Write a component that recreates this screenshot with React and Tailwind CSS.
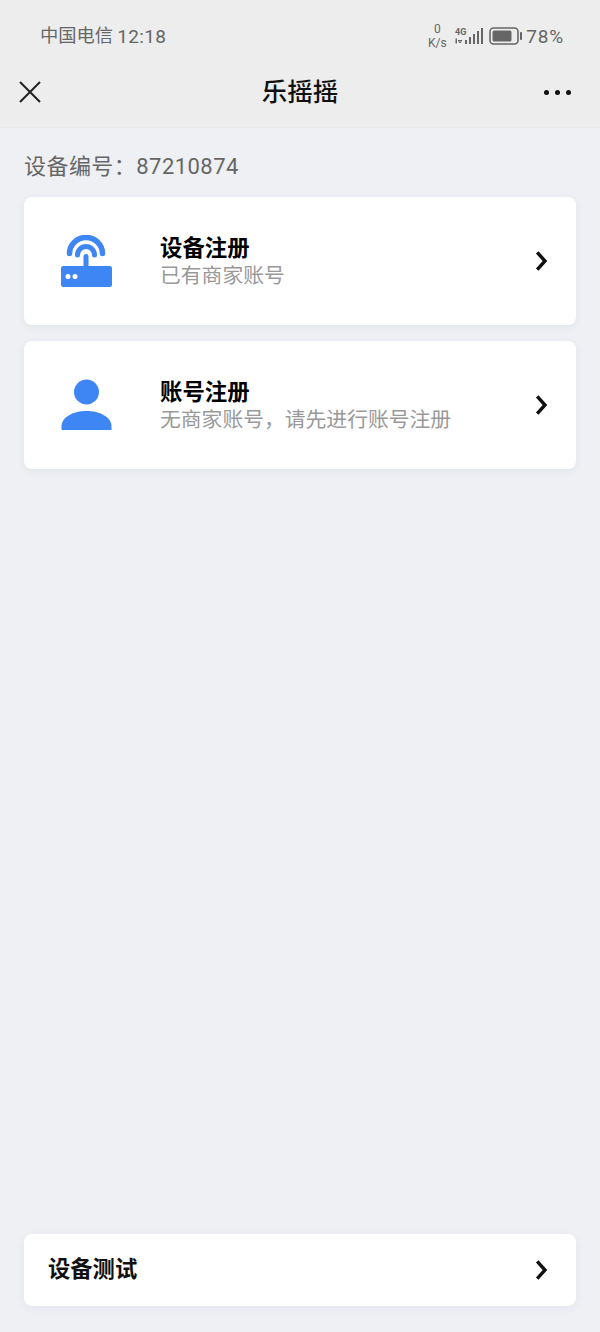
const font = { fontFamily: '"Roboto", "Noto Sans CJK SC", sans-serif' };

function Chevron() {
  return (
    <svg width="14" height="20" viewBox="0 0 14 20" fill="none" className="shrink-0">
      <path d="M2.2 1.4 L10 10 L2.2 18.6" stroke="#111" strokeWidth="3.4" strokeLinejoin="miter" />
    </svg>
  );
}

function Router() {
  return (
    <svg width="52" height="52" viewBox="0 0 52 52" fill="none">
      <path d="M9.5 18.5 A16.5 16 0 0 1 42.5 18.5" stroke="#3f86f5" strokeWidth="5.6" strokeLinecap="round" />
      <path d="M17.5 20 A8.5 8.5 0 0 1 34.5 20" stroke="#3f86f5" strokeWidth="5" strokeLinecap="round" />
      <rect x="23.5" y="19" width="5" height="14" rx="2.5" fill="#3f86f5" />
      <rect x="1" y="31" width="51" height="21" rx="2.5" fill="#3f86f5" />
      <circle cx="8" cy="41.5" r="2.5" fill="#fff" />
      <circle cx="15" cy="41.5" r="2.5" fill="#fff" />
    </svg>
  );
}

function Person() {
  return (
    <svg width="52" height="52" viewBox="0 0 52 52" fill="none">
      <circle cx="26.5" cy="13" r="12.5" fill="#3f86f5" />
      <path d="M1.5 51 L1.5 47 C2 38 13 32 26.5 32 C40 32 51 38 51.5 47 L51.5 51 Z" fill="#3f86f5" />
    </svg>
  );
}

function Card({ icon, title, sub }) {
  return (
    <div className="flex h-[128px] items-center rounded-lg bg-white pl-[36px] pr-[27px] shadow-[0_2px_10px_rgba(40,50,80,0.06)]">
      <div className="w-[52px] shrink-0">{icon}</div>
      <div className="ml-[48px] flex-1 pt-[2px]">
        <div className="text-[22.4px] leading-[28px] font-bold text-black">{title}</div>
        <div className="text-[20.8px] leading-[28px] text-[#999999]">{sub}</div>
      </div>
      <Chevron />
    </div>
  );
}

function Signal() {
  return (
    <svg width="30" height="20" viewBox="0 0 30 20" fill="#666">
      <text x="1" y="9" fontSize="9" fontWeight="700" fontFamily="Roboto, sans-serif">4G</text>
      <rect x="1.5" y="12.5" width="1.5" height="5" />
      <path d="M4 15.5 H8 V14 H4 Z M5 17 H7 V16 H5 Z" />
      <rect x="11" y="14" width="2" height="4" />
      <rect x="15" y="11" width="2" height="7" />
      <rect x="19" y="8" width="2" height="10" />
      <rect x="23" y="5" width="2" height="13" />
      <rect x="27" y="2" width="2" height="16" />
    </svg>
  );
}

function Battery() {
  return (
    <svg width="34" height="18" viewBox="0 0 34 18" fill="none">
      <rect x="1" y="1" width="28" height="16" rx="3.5" stroke="#666" strokeWidth="1.6" />
      <rect x="3.5" y="3.5" width="19" height="11" rx="1.5" fill="#666" />
      <rect x="31" y="5" width="2" height="8" rx="0.8" fill="#666" />
    </svg>
  );
}

export default function App() {
  return (
    <div className="flex h-[1332px] w-[600px] flex-col bg-[#eef0f4]" style={font}>
      <div className="h-[128px] shrink-0 border-b border-[#e8e8e8] bg-[#ededed]">
        <div className="flex h-[72px] items-center pl-[40px] pr-[36px]">
          <span className="text-[18.3px] leading-none text-[#666666]">中国电信</span>
          <span className="ml-[4px] text-[19px] leading-none tracking-[0.4px] text-[#666666]">12:18</span>
          <div className="ml-auto flex items-center">
            <div className="flex w-[22px] flex-col items-center text-[12px] leading-[14px] text-[#666666]">
              <span>0</span>
              <span>K/s</span>
            </div>
            <div className="ml-[6px]"><Signal /></div>
            <div className="ml-[5px]"><Battery /></div>
            <span className="ml-[3px] text-[19px] leading-none tracking-[0.8px] text-[#666666]">78%</span>
          </div>
        </div>
        <div className="relative flex h-[40px] items-center justify-between pl-[19px] pr-[29px]">
          <svg width="22" height="22" viewBox="0 0 22 22" fill="none">
            <path d="M1 1 L21 21 M21 1 L1 21" stroke="#222" strokeWidth="2" />
          </svg>
          <span className="absolute inset-x-0 text-center text-[25.5px] leading-[40px] font-medium text-[#111111]">乐摇摇</span>
          <div className="flex gap-[6px]">
            <span className="h-[5px] w-[5px] rounded-full bg-[#111111]" />
            <span className="h-[5px] w-[5px] rounded-full bg-[#111111]" />
            <span className="h-[5px] w-[5px] rounded-full bg-[#111111]" />
          </div>
        </div>
      </div>

      <div className="flex flex-1 flex-col px-[24px] pb-[26px]">
        <div className="h-[69px] pt-[25px] text-[22px] leading-[28px] tracking-[0.45px] text-[#666666]">设备编号：87210874</div>
        <div className="flex flex-col gap-[16px]">
          <Card icon={<Router />} title="设备注册" sub="已有商家账号" />
          <Card icon={<Person />} title="账号注册" sub="无商家账号，请先进行账号注册" />
        </div>
        <div className="mt-auto flex h-[72px] items-center justify-between rounded-lg bg-white pl-[24px] pr-[27px] shadow-[0_2px_10px_rgba(40,50,80,0.06)]">
          <span className="text-[22.3px] font-bold text-[#111111]">设备测试</span>
          <Chevron />
        </div>
      </div>
    </div>
  );
}
